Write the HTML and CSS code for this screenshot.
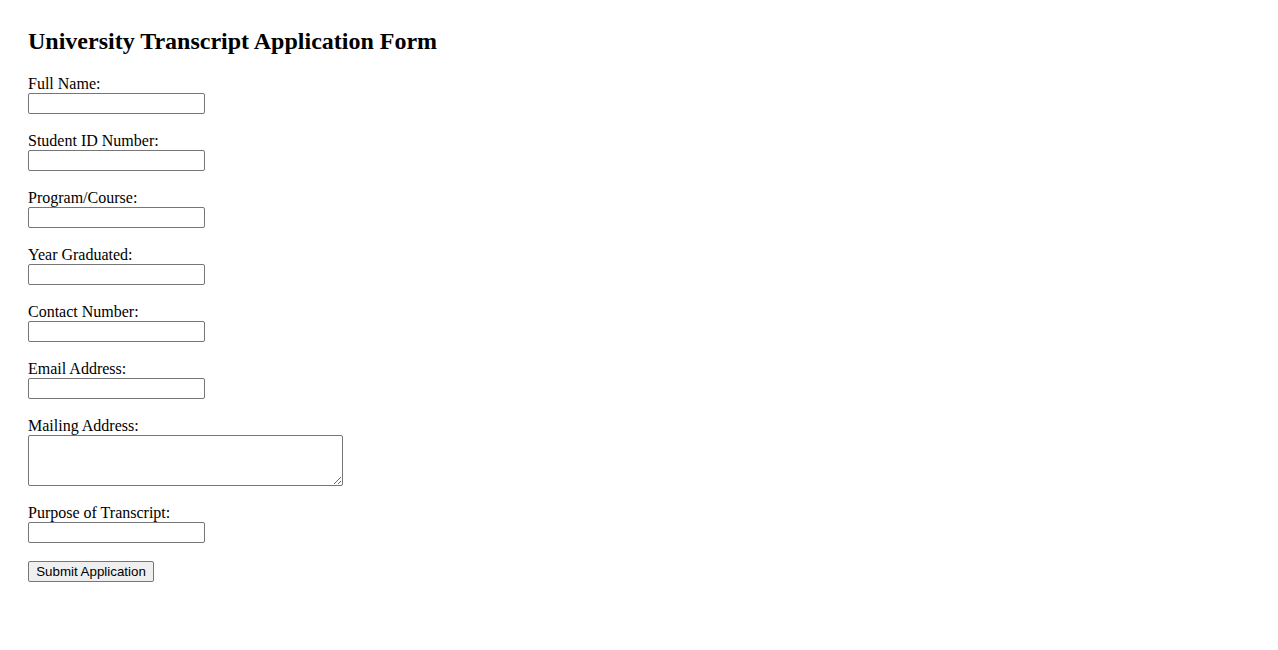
FILE: index.html
```html
<!DOCTYPE html>
<html lang="en">
<head>
  <meta charset="UTF-8" />
  <meta name="viewport" content="width=device-width, initial-scale=1.0"/>
  <title>University Transcript Application</title>
  <link rel="stylesheet" href="styles.css">
</head>
<body>

  <h2>University Transcript Application Form</h2>

  <form class="transcript-form">
    <div class="field">
      <label for="fullname">Full Name:</label>
      <input type="text" id="fullname" name="fullname">
    </div>
    <div class="field">
      <label for="studentid">Student ID Number:</label>
      <input type="text" id="studentid" name="studentid">
    </div>
    <div class="field">
      <label for="program">Program/Course:</label>
      <input type="text" id="program" name="program">
    </div>
    <div class="field">
      <label for="year">Year Graduated:</label>
      <input type="text" id="year" name="year">
    </div>
    <div class="field">
      <label for="contact">Contact Number:</label>
      <input type="text" id="contact" name="contact">
    </div>
    <div class="field">
      <label for="email">Email Address:</label>
      <input type="email" id="email" name="email">
    </div>
    <div class="field">
      <label for="address">Mailing Address:</label>
      <textarea id="address" name="address" rows="3" cols="40"></textarea>
    </div>
    <div class="field">
      <label for="purpose">Purpose of Transcript:</label>
      <input type="text" id="purpose" name="purpose">
    </div>
    <button type="submit" class="btn-submit">Submit Application</button>
  </form>

</body>
</html>
```

FILE: styles.css
```css
/* === BASE === */
body {
  margin: 8px;
  padding: 20px;
  font-family: "Liberation Serif", "Times New Roman", serif;
  font-size: 16px;
  color: #000;
  background: #fff;
}

h2 {
  margin: 0 0 19.92px;
  font-size: 24px;
  font-weight: bold;
}

/* === FORM === */
.transcript-form {
  display: flex;
  flex-direction: column;
  align-items: flex-start;
}

.field {
  display: flex;
  flex-direction: column;
  align-items: flex-start;
  margin-bottom: 17.6px;
}

.field label {
  line-height: 18.4px;
}

.field input,
.field textarea {
  box-sizing: border-box;
  border: 1px solid #767676;
  border-radius: 2px;
  padding: 1px 2px;
  font-family: "Liberation Sans", Arial, sans-serif;
  font-size: 13.33px;
  background: #fff;
}

.field input {
  width: 177px;
  height: 21px;
}

.field textarea {
  width: 315px;
  height: 51px;
  font-family: "Liberation Mono", monospace;
  resize: both;
}

/* === BUTTON === */
.btn-submit {
  box-sizing: border-box;
  width: 126px;
  height: 21px;
  padding: 1px 6px;
  border: 1px solid #767676;
  border-radius: 2px;
  background: #efefef;
  color: #000;
  font-family: "Liberation Sans", Arial, sans-serif;
  font-size: 13.33px;
  cursor: pointer;
}
```
